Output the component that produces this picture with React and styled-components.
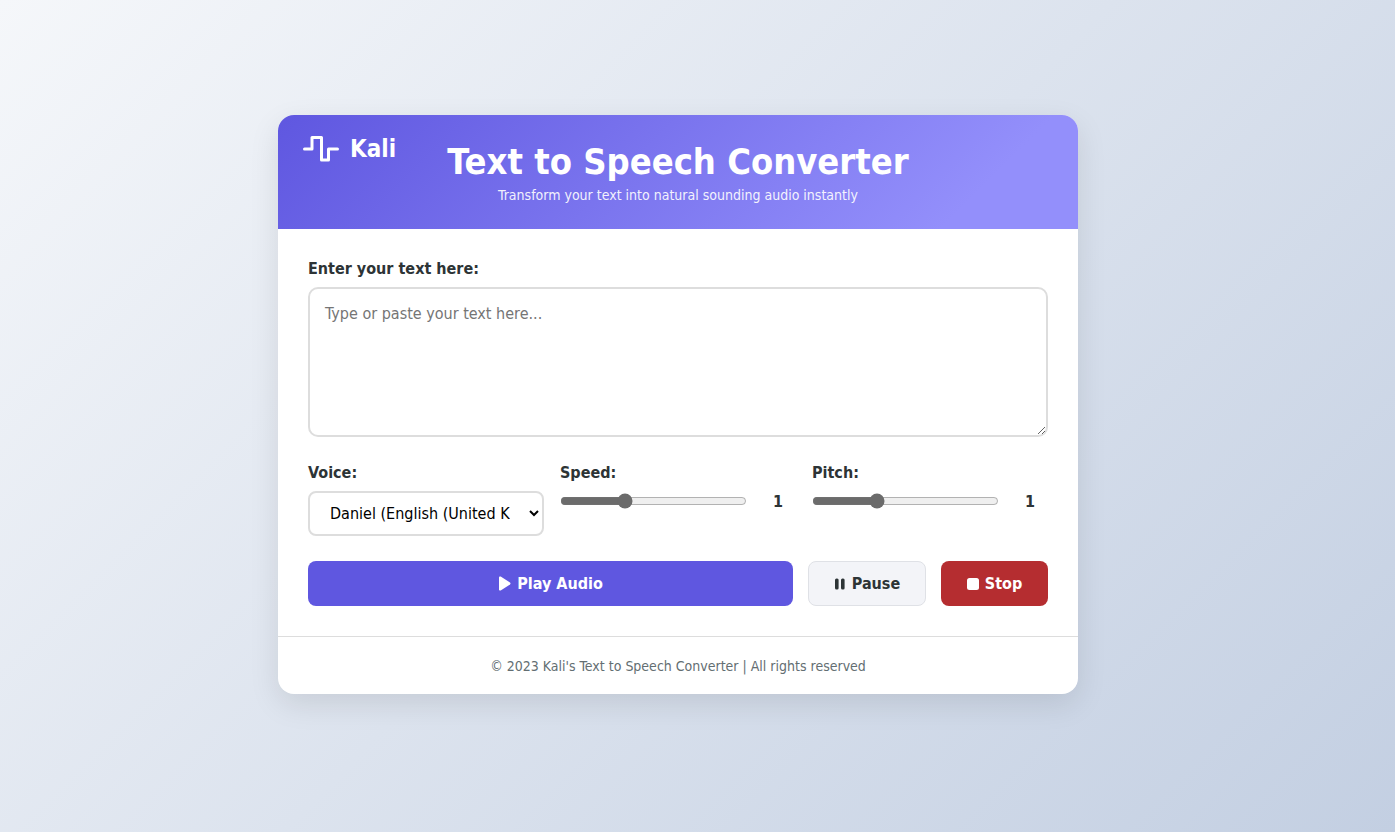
import React from 'react';
import styled, { createGlobalStyle } from 'styled-components';

const GlobalStyle = createGlobalStyle`
  * { box-sizing: border-box; }
  html, body { margin: 0; height: 100%; }
  body {
    font-family: "DejaVu Sans", "Noto Sans", sans-serif;
    font-stretch: condensed;
    color: #2d3436;
  }
`;

const Page = styled.div`
  min-height: 832px;
  display: flex;
  align-items: flex-start;
  padding: 115px 0 0 278px;
  background: linear-gradient(135deg, #f5f7fa 0%, #c3cfe2 100%);
`;

const Card = styled.main`
  width: 800px;
  background: #fff;
  border-radius: 16px;
  overflow: hidden;
  box-shadow: 0 10px 30px rgba(0, 0, 0, 0.1);
`;

const Header = styled.header`
  position: relative;
  height: 114px;
  padding-top: 24px;
  text-align: center;
  color: #fff;
  background: linear-gradient(135deg, #5f57e0 0%, #938ffb 85%);
`;

const Logo = styled.div`
  position: absolute;
  top: 17px;
  left: 25px;
  display: flex;
  align-items: center;
  gap: 11px;
  font-size: 24px;
  font-weight: 700;
  line-height: 34px;
`;

const Title = styled.h1`
  margin: 0;
  font-size: 36px;
  font-weight: 700;
  line-height: 46px;
`;

const Subtitle = styled.p`
  margin: 0;
  font-size: 14px;
  line-height: 20px;
  opacity: 0.9;
`;

const Body = styled.div`
  padding: 30px 30px;
`;

const Label = styled.label`
  display: block;
  margin-bottom: 8px;
  font-size: 16px;
  font-weight: 700;
  line-height: 20px;
  color: #2d3436;
`;

const TextArea = styled.textarea`
  display: block;
  width: 100%;
  height: 150px;
  padding: 15px;
  border: 2px solid #ddd;
  border-radius: 10px;
  font-family: inherit;
  font-stretch: inherit;
  font-size: 16px;
  line-height: 20px;
  outline: none;
`;

const Controls = styled.div`
  display: grid;
  grid-template-columns: repeat(3, 1fr);
  gap: 16px;
  margin-top: 26px;
`;

const Select = styled.select`
  display: block;
  width: 100%;
  height: 45px;
  padding: 0 16px;
  border: 2px solid #ddd;
  border-radius: 8px;
  background: #fff;
  color: #000;
  font-family: inherit;
  font-stretch: inherit;
  font-size: 16px;
`;

const SliderRow = styled.div`
  display: flex;
  align-items: center;
  gap: 15px;
  height: 20px;
`;

const Slider = styled.input`
  flex: 0 0 187px;
  width: 187px;
  height: 16px;
  margin: 0;
  accent-color: #6b6b6b;
`;

const SliderValue = styled.span`
  flex: 1;
  text-align: center;
  font-size: 16px;
  font-weight: 700;
  padding-right: 2px;
`;

const Actions = styled.div`
  display: flex;
  gap: 15px;
  margin-top: 25px;
`;

const Button = styled.button`
  flex: ${p => (p.$grow ? 1 : '0 0 auto')};
  width: ${p => p.$width || 'auto'};
  height: 45px;
  display: flex;
  align-items: center;
  justify-content: center;
  gap: 6px;
  border: 1px solid ${p => p.$border || 'transparent'};
  border-radius: 8px;
  background: ${p => p.$bg};
  color: ${p => p.$color};
  font-family: inherit;
  font-stretch: inherit;
  font-size: 16px;
  font-weight: 700;
`;

const Footer = styled.footer`
  height: 58px;
  display: flex;
  align-items: center;
  justify-content: center;
  border-top: 1px solid #ddd;
  font-size: 14px;
  color: #636e72;
`;

const Pulse = () => (
  <svg width="36" height="26" viewBox="0 0 36 26" fill="none" stroke="currentColor" strokeWidth="3" strokeLinejoin="round" strokeLinecap="round">
    <path d="M1.500 13H9V1.500H18.500V24H25.500V13H34.500" />
  </svg>
);

const PlayIcon = () => (
  <svg width="13" height="15" viewBox="0 0 13 15" fill="currentColor">
    <path d="M1 1.500C1 .6 1.900.1 2.700.6L12 6.500C12.700 7 12.700 8 12 8.500L2.700 14.400C1.900 14.900 1 14.400 1 13.500Z" />
  </svg>
);

const PauseIcon = () => (
  <svg width="12" height="12" viewBox="0 0 12 12" fill="currentColor">
    <rect x="1" y="0.500" width="3.600" height="11" rx="1.500" />
    <rect x="7" y="0.500" width="3.600" height="11" rx="1.500" />
  </svg>
);

const StopIcon = () => (
  <svg width="12" height="12" viewBox="0 0 12 12" fill="currentColor">
    <rect x="0" y="0" width="12" height="12" rx="2.500" />
  </svg>
);

export default function App() {
  return (
    <Page>
      <GlobalStyle />
      <Card>
        <Header>
          <Logo>
            <Pulse />
            Kali
          </Logo>
          <Title>Text to Speech Converter</Title>
          <Subtitle>Transform your text into natural sounding audio instantly</Subtitle>
        </Header>
        <Body>
          <Label htmlFor="text">Enter your text here:</Label>
          <TextArea id="text" placeholder="Type or paste your text here..." />
          <Controls>
            <div>
              <Label htmlFor="voice">Voice:</Label>
              <Select id="voice" defaultValue="daniel">
                <option value="daniel">Daniel (English (United Kingdom))</option>
              </Select>
            </div>
            <div>
              <Label htmlFor="speed">Speed:</Label>
              <SliderRow>
                <Slider id="speed" type="range" min="0.5" max="2" step="0.1" defaultValue="1" />
                <SliderValue>1</SliderValue>
              </SliderRow>
            </div>
            <div>
              <Label htmlFor="pitch">Pitch:</Label>
              <SliderRow>
                <Slider id="pitch" type="range" min="0.5" max="2" step="0.1" defaultValue="1" />
                <SliderValue>1</SliderValue>
              </SliderRow>
            </div>
          </Controls>
          <Actions>
            <Button $grow $bg="#5f57e0" $color="#fff"><PlayIcon />Play Audio</Button>
            <Button $width="118px" $bg="#f3f4f8" $color="#2d3436" $border="#dfe1e6"><PauseIcon />Pause</Button>
            <Button $width="107px" $bg="#b52d30" $color="#fff"><StopIcon />Stop</Button>
          </Actions>
        </Body>
        <Footer>© 2023 Kali's Text to Speech Converter | All rights reserved</Footer>
      </Card>
    </Page>
  );
}
